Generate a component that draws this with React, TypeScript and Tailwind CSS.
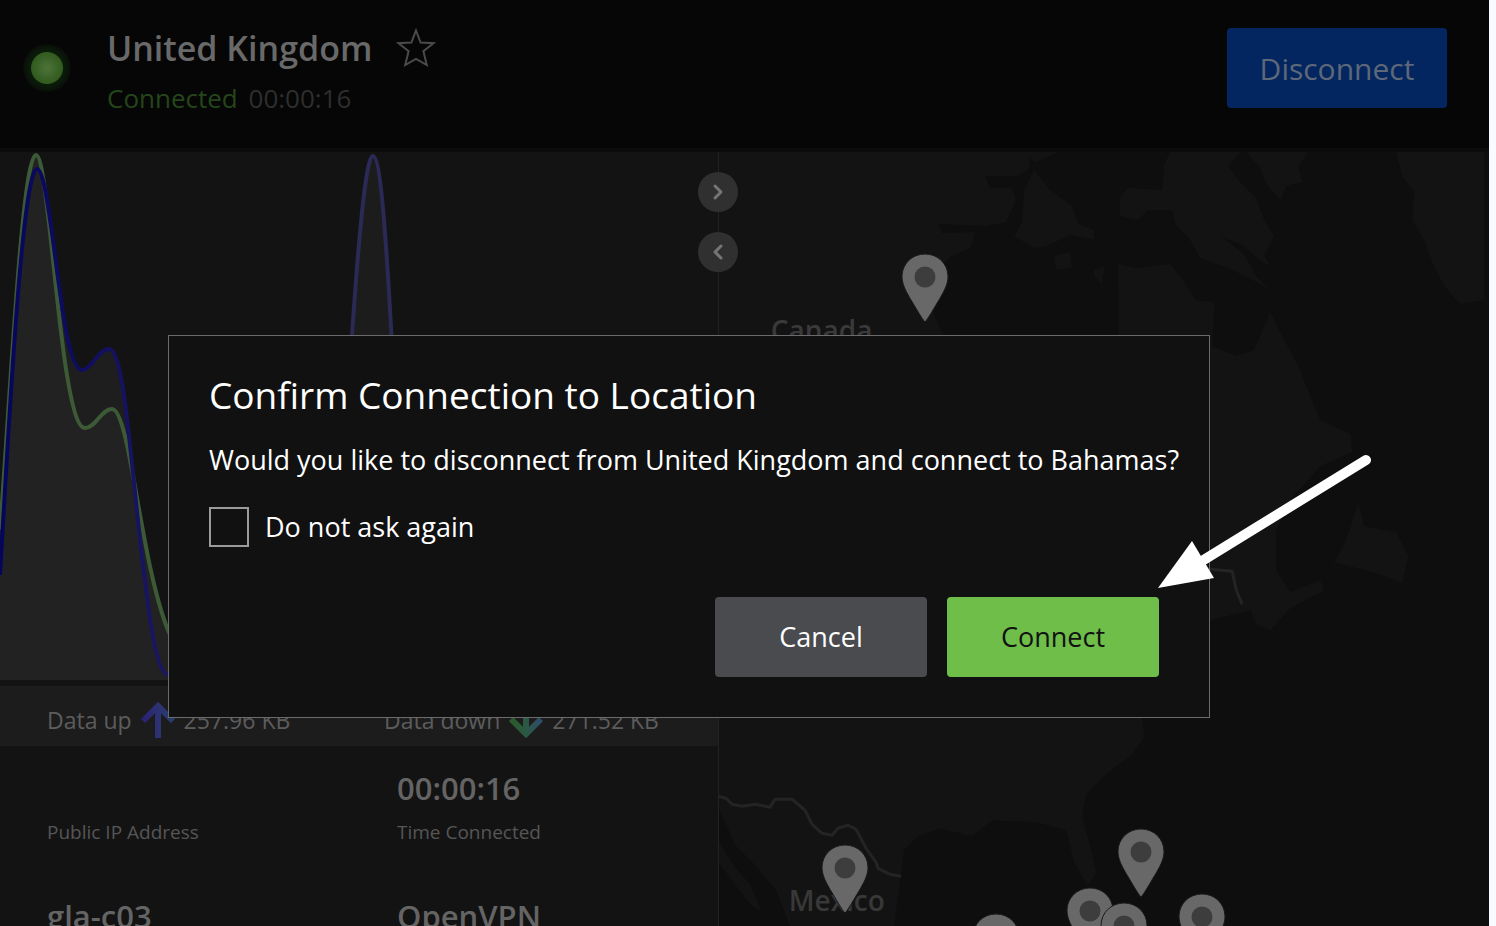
import React, { useState } from "react";
import { ChevronLeft, ChevronRight } from "lucide-react";

const pins = [
  { name: "Canada", position: "left-[184px] top-[102px]" },
  { name: "Mexico", position: "left-[104px] top-[693px]" },
  { name: "Bahamas", position: "left-[400px] top-[677px]" },
  { name: "Costa Rica", position: "left-[255px] top-[762px]" },
  { name: "Jamaica", position: "left-[349px] top-[736px]" },
  { name: "Panama", position: "left-[383px] top-[751px]" },
  { name: "Puerto Rico", position: "left-[461px] top-[742px]" },
];

const stats = [
  { value: "", label: "Public IP Address" },
  { value: "00:00:16", label: "Time Connected" },
  { value: "gla-c03", label: "Server" },
  { value: "OpenVPN", label: "Protocol" },
];

const Header: React.FC = () => (
  <header className="flex shrink-0 items-start justify-between border-b-4 border-[#0c0c0c] bg-[#060606] pb-10 pl-[23px] pr-[42px] pt-7">
    <div className="flex h-20 items-center gap-9">
      <div className="flex size-12 items-center justify-center rounded-full bg-[radial-gradient(circle,#0a1f08_45%,#0a120a_65%,#080a08_71%)]">
        <div className="size-8 rounded-full bg-[radial-gradient(circle,#4d7339_0%,#396126_50%,#245012_100%)]" />
      </div>
      <div className="pt-3">
        <div className="flex items-center gap-6">
          <h1 className="text-[34px] font-semibold leading-[48px] text-[#696969]">United Kingdom</h1>
          <button aria-label="Add to favourites">
            <svg width="40" height="40" viewBox="0 0 40 40" fill="none" stroke="#4b4b4b" strokeWidth="2">
              <path d="M20 2.500L24.600 14.600L37.500 15.200L27.400 23.200L30.800 37L20 31L9.200 37L12.600 23.200L2.500 15.200L15.400 14.600Z" />
            </svg>
          </button>
        </div>
        <p className="text-[26px] leading-[52px]">
          <span className="text-[#24461a]">Connected</span>{" "}
          <span className="ml-1 text-[#2e2e2e]">00:00:16</span>
        </p>
      </div>
    </div>
    <button className="h-20 w-[220px] rounded bg-[#042660] text-[30px] text-[#5d6879]">Disconnect</button>
  </header>
);

const TrafficChart: React.FC = () => (
  <svg className="block h-[528px] w-full" viewBox="0 152 718 528" preserveAspectRatio="none" fill="none">
    <path d="M0 575C8 440 22 169 37 169C50 169 62 370 82 370C92 370 98 349 109 349C130 349 140 677 168 677L210 680H0Z" fill="#1e1e1e" />
    <path d="M0 530C10 400 22 155 36 155C48 155 62 428 85 428C96 428 101 409 112 409C130 409 140 590 175 640L220 680H0Z" fill="#222222" />
    <path d="M330 680C345 430 360 156 373 156C385 156 392 400 410 680Z" fill="#1c1c1c" />
    <path
      d="M0 530C10 400 22 155 36 155C50 155 60 428 85 428C96 428 101 409 112 409C130 409 140 560 168 630C180 660 200 678 220 678"
      stroke="#3d5a37"
      strokeWidth="4"
    />
    <path
      d="M0 575C8 440 22 169 37 169C52 169 60 370 82 370C92 370 98 349 109 349C124 349 130 455 142 556C149 612 155 672 168 675"
      stroke="url(#upload)"
      strokeWidth="4"
    />
    <path d="M330 678C346 440 360 156 373 156C384 156 390 300 410 678" stroke="#2b2955" strokeWidth="4" />
    <defs>
      <linearGradient id="upload" gradientUnits="userSpaceOnUse" x1="0" y1="0" x2="170" y2="0">
        <stop stopColor="#05055c" />
        <stop offset="1" stopColor="#1b1760" />
      </linearGradient>
    </defs>
  </svg>
);

const UpArrow: React.FC = () => (
  <svg width="34" height="36" viewBox="0 0 34 36" fill="none" strokeWidth="6">
    <path d="M17 36V5M2 19L17 4L32 19" stroke="url(#up)" />
    <defs>
      <linearGradient id="up" gradientUnits="userSpaceOnUse" x1="0" y1="0" x2="34" y2="0">
        <stop stopColor="#292074" />
        <stop offset="0.5" stopColor="#2d3273" />
        <stop offset="1" stopColor="#263e6d" />
      </linearGradient>
    </defs>
  </svg>
);

const DownArrow: React.FC = () => (
  <svg width="34" height="36" viewBox="0 0 34 36" fill="none" strokeWidth="6">
    <path d="M17 0V31M2 17L17 32L32 17" stroke="url(#down)" />
    <defs>
      <linearGradient id="down" gradientUnits="userSpaceOnUse" x1="0" y1="0" x2="34" y2="0">
        <stop stopColor="#2c5a26" />
        <stop offset="0.5" stopColor="#2b5943" />
        <stop offset="1" stopColor="#2f4a6c" />
      </linearGradient>
    </defs>
  </svg>
);

const TrafficPanel: React.FC = () => (
  <section className="w-[48.2%] shrink-0 bg-[#131313]">
    <TrafficChart />
    <div className="mt-[6px] grid h-[60px] grid-cols-[337px_1fr] items-center bg-[#1c1c1c] pl-[47px] pt-2 text-[23px] leading-8 text-[#5c5c5c]">
      <div className="flex items-center gap-[9px]">
        <span>Data up</span>
        <UpArrow />
        <span>257.96 KB</span>
      </div>
      <div className="flex items-center gap-[9px]">
        <span>Data down</span>
        <DownArrow />
        <span>271.52 KB</span>
      </div>
    </div>
    <dl className="grid grid-cols-[350px_1fr] gap-y-12 pl-[47px] pt-[22px]">
      {stats.map((stat) => (
        <div key={stat.label} className="flex flex-col-reverse gap-2">
          <dt className="text-[19px] leading-8 text-[#565656]">{stat.label}</dt>
          <dd className="h-10 text-[31px] font-semibold leading-10 text-[#646464]">{stat.value}</dd>
        </div>
      ))}
    </dl>
  </section>
);

const Pin: React.FC<{ name: string; position: string }> = ({ name, position }) => (
  <button aria-label={name} className={"absolute " + position}>
    <svg width="46" height="68" viewBox="0 0 46 68" className="block overflow-visible">
      <path
        d="M23 0C36 0 46 10 46 22.500C46 31 41 39 37 46C32 54 26 65 23 68C20 65 14 54 9 46C5 39 0 31 0 22.500C0 10 10 0 23 0Z"
        fill="#686868"
        stroke="#1a1a1a"
      />
      <circle cx="23" cy="23" r="10.5" fill="#3d3d3d" />
    </svg>
  </button>
);

const WorldMap: React.FC = () => (
  <section className="relative min-w-0 flex-1 bg-[#0e0e0e]">
    <div className="absolute inset-0 overflow-hidden">
      <svg className="h-full w-full" viewBox="718 152 771 774" preserveAspectRatio="xMinYMin slice" fill="#131313">
        <path d="M718 152H1058L1036 162L1028 158L1030 168L1018 176L985 176L990 188L1012 188L1016 200L1006 222L985 226L938 224L942 233L975 232L970 248L952 256L935 270L928 300L945 340H718Z" />
        <path d="M1034 170L1050 190L1072 206L1078 232L1046 246L1034 248L1014 236L1022 222L1024 190Z" />
        <path d="M1054 256L1070 252L1072 268L1056 270Z M1094 270L1104 266L1102 284L1094 276Z M1060 206L1074 212L1078 224L1094 230L1094 240L1066 234Z" />
        <path d="M1170 152H1240L1228 166L1240 182L1256 198L1264 220L1274 236L1264 256L1270 266L1262 262L1240 244L1220 236L1244 254L1256 276L1270 290L1256 282L1228 268L1200 258L1190 240L1176 226L1172 210L1148 210L1138 220L1120 216L1120 196L1128 188L1162 190L1164 164Z" />
        <path d="M1246 152H1308L1298 166L1302 182L1286 186L1280 200L1266 184L1260 168Z" />
        <path d="M1396 152H1484V300L1460 304L1444 286L1432 262L1424 240L1412 220L1414 192L1402 176Z" />
        <path d="M1118 264L1136 268L1170 264L1184 282L1196 300L1214 302L1212 346L1236 356L1254 350L1270 312L1284 340L1298 366L1310 396L1320 420L1350 434L1352 452L1320 466L1290 500L1276 530L1276 570L1290 592L1320 580L1324 590L1290 608L1270 630L1256 624L1250 610L1210 620H1120Z" />
        <path d="M1366 478L1358 502L1364 526L1396 532L1408 556L1402 583L1380 574L1334 562L1346 540Z" />
        <path d="M718 700H1140L1144 736L1132 754L1106 774L1086 794L1082 816L1090 846L1096 872L1088 886L1074 862L1066 830L1036 822L992 820L972 836L940 828L918 836L904 850L900 880L894 926H790L776 890L756 866L736 846L718 806Z" />
        <path d="M718 840L734 866L750 884L762 912L750 904L732 880L718 862Z" />
        <g fill="none" stroke="#242424" strokeWidth="3" strokeLinejoin="round">
          <path d="M718 796L726 798L732 804L742 806L755 804L770 807L775 799H792L805 810L812 824L822 833L832 835L838 828L848 825L856 829L866 848L876 862L878 868L890 874L901 876" />
          <path d="M1210 569L1232 571L1236 590L1242 604" />
        </g>
      </svg>
      <span className="absolute left-[53px] top-[158px] text-[28px] font-semibold leading-10 text-[#3a3a3a]">Canada</span>
      <span className="absolute left-[71px] top-[728px] text-[28px] font-semibold leading-10 text-[#383838]">Mexico</span>
      {pins.map((pin) => (
        <Pin key={pin.name} {...pin} />
      ))}
    </div>
    {/* Splitter handles */}
    <div className="absolute inset-y-0 left-0 border-l border-[#222222]" />
    <div className="absolute -left-5 top-5 flex flex-col gap-5">
      <button aria-label="Expand panel" className="flex size-10 items-center justify-center rounded-full bg-[#303030] text-[#757575]">
        <ChevronRight className="size-6" strokeWidth={3} />
      </button>
      <button aria-label="Collapse panel" className="flex size-10 items-center justify-center rounded-full bg-[#303030] text-[#757575]">
        <ChevronLeft className="size-6" strokeWidth={3} />
      </button>
    </div>
  </section>
);

const ConfirmDialog: React.FC = () => {
  const [dontAsk, setDontAsk] = useState(false);

  return (
    <div className="absolute inset-0 pl-[168px] pt-[335px]">
      <div
        role="dialog"
        aria-labelledby="confirm-title"
        className="w-[1042px] max-w-full border border-[#6b6b6b] bg-[#111111] px-10 pb-10 pt-[31px] text-white"
      >
        <h2 id="confirm-title" className="text-[37px] leading-[56px]">
          Confirm Connection to Location
        </h2>
        <p className="mt-[17px] whitespace-nowrap text-[27px] leading-10">
          Would you like to disconnect from United Kingdom and connect to Bahamas?
        </p>
        <label className="mt-[27px] flex items-center gap-4 text-[27px] leading-10">
          <input
            type="checkbox"
            checked={dontAsk}
            onChange={(e) => setDontAsk(e.target.checked)}
            className="size-10 appearance-none border-2 border-[#9b9b9b] checked:bg-[#6fbe49]"
          />
          Do not ask again
        </label>
        <div className="mr-[10px] mt-[50px] flex justify-end gap-5 text-[27px]">
          <button className="h-20 w-[212px] rounded bg-[#4a4b4f]">Cancel</button>
          <button className="h-20 w-[212px] rounded bg-[#6fbe49] text-[#111111]">Connect</button>
        </div>
      </div>
      <svg className="absolute left-[1158px] top-[450px]" width="220" height="140" viewBox="0 0 220 140" fill="#ffffff">
        <path d="M208 10L44 111" stroke="#ffffff" strokeWidth="10" strokeLinecap="round" />
        <path d="M0 138L34 91L56 128Z" />
      </svg>
    </div>
  );
};

const App: React.FC = () => (
  <div className="h-screen bg-[#f8faff] pr-[7px] font-['Open_Sans',sans-serif]">
    <div className="relative flex h-full flex-col overflow-hidden bg-[#131313]">
      <Header />
      <main className="flex min-h-0 flex-1">
        <TrafficPanel />
        <WorldMap />
      </main>
      <ConfirmDialog />
    </div>
  </div>
);

export default App;
